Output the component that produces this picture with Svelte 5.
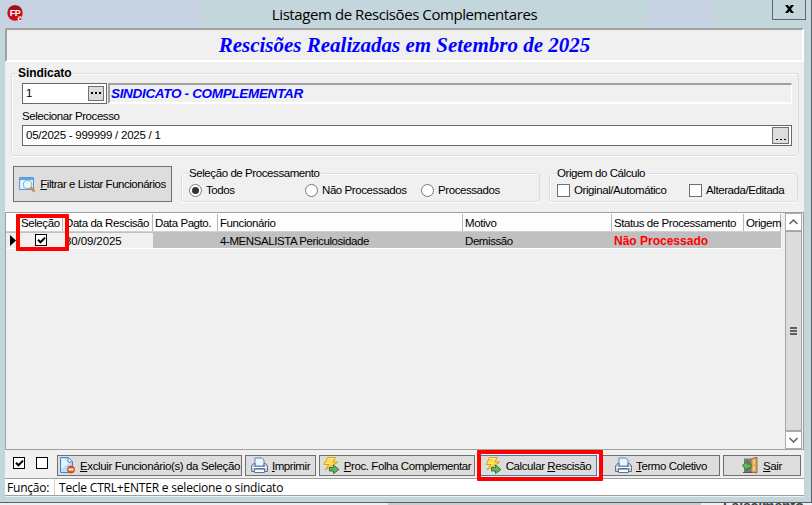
<script>
  let code = $state('1');
  let process = $state('05/2025 - 999999 / 2025 / 1');
  let filter = $state('Todos');

  const filters = [
    { label: 'Todos', cls: 'r-all' },
    { label: 'Não Processados', cls: 'r-pending' },
    { label: 'Processados', cls: 'r-done' }
  ];

  const columns = [
    { key: 'sel', label: 'Seleção' },
    { key: 'date', label: 'Data da Rescisão' },
    { key: 'paid', label: 'Data Pagto.' },
    { key: 'name', label: 'Funcionário' },
    { key: 'reason', label: 'Motivo' },
    { key: 'status', label: 'Status de Processamento' },
    { key: 'origin', label: 'Origem' }
  ];

  const row = {
    date: '30/09/2025',
    paid: '',
    name: '4-MENSALISTA Periculosidade',
    reason: 'Demissão',
    status: 'Não Processado',
    origin: ''
  };
</script>

{#snippet check()}
  <svg class="tick" width="9" height="9" viewBox="0 0 9 9"><path d="M1 3.7 3.5 6.3 8 1.6" fill="none" stroke="#000" stroke-width="2" /></svg>
{/snippet}

{#snippet printer()}
  <svg width="17" height="17" viewBox="0 0 17 17">
    <path d="M4 1h7l2 2v6H4z" fill="#e8f5ff" stroke="#5d89bd" />
    <path d="M2.5 6.5H4V10h9V6.5h1.5L16.5 9v5.5H.5V9z" fill="#c6cedb" stroke="#64718b" />
    <path d="M1 10.5h15" stroke="#fff" />
    <path d="M3.5 11.5h10v4h-10z" fill="#f6faff" stroke="#607495" />
    <path d="M4 12.5h9" stroke="#83a9d5" />
  </svg>
{/snippet}

{#snippet bolt()}
  <svg width="17" height="17" viewBox="0 0 17 17">
    <path d="M4.5.5h8L10 5h5L2 13l4-5.500H1z" fill="#ffda48" stroke="#dba31d" stroke-linejoin="round" />
    <path d="M5.500 1.500h5M3 6.500l5-.5" stroke="#fff19a" />
    <path d="M6.500 10.500h4V8l5.500 4.500-5.500 4V14h-4z" fill="#63b552" stroke="#34783b" />
  </svg>
{/snippet}

<div class="screen">
  <div class="window">
    <header>
      <svg class="logo" width="17" height="17" viewBox="0 0 17 17">
        <circle cx="8" cy="8" r="7.700" fill="#c90d16" />
        <path d="M1 5a7.700 7.700 0 0 1 14 0" fill="#9e141c" />
        <text x="2.700" y="11" font-size="9" textLength="10.500" lengthAdjust="spacingAndGlyphs" font-weight="bold" fill="#fff">FP</text>
        <circle cx="12.800" cy="13.500" r="2.300" fill="#fff" />
        <path d="m11.500 12 2.500 2.500M14 12.500v2h-2" fill="none" stroke="#d31b27" />
      </svg>
      <h1>Listagem de Rescisões Complementares</h1>
      <button class="close" aria-label="Fechar">
        <svg width="9" height="8" viewBox="0 0 9 8"><path d="M0 0h3l1.500 2L6 0h3L6 4l3 4H6L4.500 6 3 8H0l3-4z" /></svg>
      </button>
    </header>

    <main>
      <div class="banner"><span>Rescisões Realizadas em Setembro de 2025</span></div>

      <div class="form">
        <section class="group union">
          <div class="legend"><b>Sindicato</b></div>
          <div class="union-line">
            <div class="edit code"><span>{code}</span><button class="dots bold" aria-label="Buscar"><i></i><i></i><i></i></button></div>
            <div class="union-name"><span>SINDICATO - COMPLEMENTAR</span></div>
          </div>
          <div class="label"><span>Selecionar Processo</span></div>
          <div class="edit process"><span>{process}</span><button class="dots" aria-label="Selecionar"><i></i><i></i><i></i></button></div>
        </section>

        <div class="filters">
          <button class="btn filter">
            <svg width="17" height="17" viewBox="0 0 17 17">
              <path d="M.5 1.500h14v12H.5z" fill="#d4edff" stroke="#5b9bd5" />
              <path d="M1 2h13v2H1z" fill="#5fa8e8" />
              <path d="M2 6h3M2 8h3M2 10h3" stroke="#fff" />
              <circle cx="8.500" cy="8.500" r="4.200" fill="#e5f7ff" stroke="#8ea6b8" />
              <path d="m11.500 11.500 4 4" stroke="#d58a3e" stroke-width="2.500" />
            </svg>
            <span><u>F</u>iltrar e Listar Funcionários</span>
          </button>
          <section class="group processing">
            <div class="legend"><span>Seleção de Processamento</span></div>
            <div class="options">
              {#each filters as f}
                <button class="option {f.cls}" onclick={() => (filter = f.label)}>
                  <i class="radio" class:on={filter === f.label}></i><span>{f.label}</span>
                </button>
              {/each}
            </div>
          </section>
          <section class="group source">
            <div class="legend"><span>Origem do Cálculo</span></div>
            <div class="options">
              <div class="option original"><i class="box gray"></i><span>Original/Automático</span></div>
              <div class="option edited"><i class="box gray"></i><span>Alterada/Editada</span></div>
            </div>
          </section>
        </div>
      </div>

      <div class="grid">
        <div class="table">
          <div class="row head">
            <div class="cell mark"></div>
            {#each columns as c}
              <div class="cell {c.key}"><span>{c.label}</span></div>
            {/each}
          </div>
          <div class="row data">
            <div class="cell mark"><svg width="6" height="11" viewBox="0 0 6 11"><path d="M0 0 6 5.500 0 11z" /></svg></div>
            <div class="cell sel"><i class="box">{@render check()}</i></div>
            {#each columns.slice(1) as c}
              <div class="cell {c.key}"><span>{row[c.key]}</span></div>
            {/each}
          </div>
          <div class="callout on-selection"></div>
        </div>
        <div class="scroll">
          <div class="arrow"><svg width="9" height="6" viewBox="0 0 9 6"><path d="m.5 5 4-4 4 4" fill="none" stroke="#606060" stroke-width="1.500" /></svg></div>
          <div class="thumb"><i></i><i></i><i></i></div>
          <div class="arrow"><svg width="9" height="6" viewBox="0 0 9 6"><path d="m.5 1 4 4 4-4" fill="none" stroke="#606060" stroke-width="1.500" /></svg></div>
        </div>
      </div>

      <div class="toolbar">
        <i class="box">{@render check()}</i>
        <i class="box second"></i>
        <button class="btn delete">
          <svg width="17" height="17" viewBox="0 0 17 17">
            <path d="M1.500.5h8l4 4v11h-12z" fill="#b9ddfc" stroke="#4588ce" />
            <path d="M9 1v4h4.500" fill="#fff" stroke="#4588ce" />
            <path d="M2.500 2v10l7-6V5H8V2z" fill="#e7f5ff" />
            <circle cx="12" cy="12.500" r="3.500" fill="#e85e26" stroke="#c44618" />
            <path d="M9.500 12.500h5" stroke="#fff" stroke-width="1.700" />
          </svg>
          <span><u>E</u>xcluir Funcionário(s) da Seleção</span>
        </button>
        <button class="btn print">{@render printer()}<span><u>I</u>mprimir</span></button>
        <button class="btn payroll">{@render bolt()}<span><u>P</u>roc. Folha Complementar</span></button>
        <button class="btn calculate">{@render bolt()}<span>Calcular <u>R</u>escisão</span><div class="callout on-calculate"></div></button>
        <button class="btn term">{@render printer()}<span><u>T</u>ermo Coletivo</span></button>
        <button class="btn exit">
          <svg width="17" height="17" viewBox="0 0 17 17">
            <path d="M2 1.500h10v14H2z" fill="#777b80" />
            <path d="M1 15.500h14" stroke="#555" />
            <path d="m9 2 6-2v16l-6-1z" fill="#dea35c" stroke="#a56d32" />
            <path d="m11 3 2-.5v5H11zM11 9h2v5l-2-.5z" fill="#f1c889" />
            <path d="M.5 8.500 5 4v3h4v4H5v3z" fill="#68b75a" stroke="#317b37" />
          </svg>
          <span><u>S</u>air</span>
        </button>
      </div>

      <footer><div class="hint-label"><span>Função:</span></div><div class="hint"><span>Tecle CTRL+ENTER e selecione o sindicato</span></div></footer>
    </main>
  </div>
  <div class="behind"><div class="behind-bar"></div><b>Falecimento</b></div>
</div>

<style>
  :global(body) {
    overflow: hidden;
  }

  .screen {
    width: 812px;
    height: 505px;
    overflow: hidden;
    color: #000;
    font: 11.5px/13px 'Liberation Sans', Arial, sans-serif;
    letter-spacing: -0.42px;
    white-space: nowrap;
  }

  .screen :global(*) {
    box-sizing: border-box;
  }

  button {
    padding: 0;
    font: inherit;
    letter-spacing: inherit;
    color: inherit;
  }

  svg {
    display: block;
    flex: none;
  }

  .window {
    display: flex;
    flex-direction: column;
    height: 503px;
    padding: 0 7px 0 5px;
    border-right: 1px solid #585f6b;
    border-bottom: 1px solid #585f6b;
    background: #c3d6dc;
  }

  header {
    display: flex;
    align-items: flex-start;
    height: 28px;
    margin: 0 -7px 0 -5px;
    padding: 0 5px 0 7px;
    background: linear-gradient(90deg, #c7d2e2 203px, #c3d6dc 203px 651px, #c7d2e2 651px 715px, #c3d6dc 715px);
  }

  .logo {
    margin-top: 5px;
  }

  h1 {
    flex: 1;
    margin: 4px 0 0;
    padding-left: 13px;
    font: 15px/20px 'Open Sans', 'Noto Sans', sans-serif;
    letter-spacing: -0.42px;
    text-align: center;
  }

  .close {
    display: flex;
    justify-content: center;
    width: 34px;
    height: 20px;
    padding-top: 5px;
    border: 1px solid #5f6574;
    border-top: 0;
    background: #c3d6dc;
  }

  main {
    width: 799px;
    height: 469px;
    background: #f0f0f0;
  }

  .banner {
    height: 34px;
    border: 2px solid #a0a0a0;
    border-right-color: #fff;
    border-bottom-color: #fff;
    font: italic bold 21px/30px 'Liberation Serif', 'Times New Roman', serif;
    letter-spacing: 0;
    color: #00f;
    text-align: center;
  }

  .form {
    height: 150px;
    padding: 11px 5px 0 6px;
  }

  .group {
    border: 1px solid #d5dfe5;
    border-radius: 3px;
    box-shadow: inset 1px 1px #fff, 0 1px #fff;
  }

  .legend {
    display: flex;
    height: 13px;
    margin: -7px 0 0 6px;
  }

  .legend span,
  .legend b {
    padding: 0 1px;
    background: #f0f0f0;
  }

  .union {
    height: 83px;
    padding: 0 6px 0 10px;
  }

  .union .legend {
    margin-left: -5px;
    font-size: 12px;
    letter-spacing: -0.05px;
  }

  .union-line {
    display: flex;
    gap: 1px;
    margin-top: 3px;
  }

  .edit {
    display: flex;
    align-items: center;
    height: 21px;
    padding: 0 2px 1px 3px;
    border: 1px solid #696969;
    background: #fff;
  }

  .edit span {
    flex: 1;
    letter-spacing: -0.25px;
  }

  .code {
    width: 85px;
  }

  .dots {
    display: flex;
    align-items: flex-end;
    justify-content: center;
    gap: 2px;
    width: 17px;
    height: 17px;
    padding-bottom: 3px;
    border: 1px solid #707070;
    background: #ddd;
  }

  .dots i {
    width: 2px;
    height: 1px;
    background: #000;
  }

  .dots.bold {
    width: 16px;
    height: 15px;
    padding-bottom: 6px;
  }

  .dots.bold i {
    height: 2px;
  }

  .union-name {
    flex: 1;
    height: 21px;
    padding-left: 1px;
    border: 2px solid #a0a0a0;
    border-right: 1px solid #fff;
    border-bottom-color: #fff;
    color: #00f;
    font: italic bold 13.5px/17px 'Liberation Sans', Arial, sans-serif;
    letter-spacing: -0.32px;
  }

  .label {
    margin: 6px 0 2px;
  }

  .filters {
    display: flex;
    align-items: flex-start;
    padding: 10px 0 0 2px;
  }

  .btn {
    display: flex;
    align-items: center;
    justify-content: center;
    gap: 4px;
    height: 21px;
    border: 1px solid #707070;
    background: #ddd;
  }

  .btn span {
    padding-top: 1px;
  }

  .filter {
    width: 159px;
    height: 36px;
    letter-spacing: -0.48px;
  }

  .processing {
    width: 359px;
    height: 29px;
    margin: 7px 9px 0;
  }

  .source {
    width: 249px;
    height: 29px;
    margin-top: 7px;
  }

  .options {
    display: flex;
    padding-left: 7px;
    margin-top: 3px;
  }

  .option {
    display: flex;
    align-items: center;
    gap: 4px;
    border: 0;
    background: none;
  }

  .option span {
    padding-top: 1px;
  }

  .r-all,
  .r-pending {
    width: 116px;
  }

  .original {
    width: 132px;
  }

  .radio {
    display: flex;
    align-items: center;
    justify-content: center;
    width: 13px;
    height: 13px;
    border: 1px solid #777;
    border-radius: 50%;
    background: #fff;
  }

  .radio.on::after {
    content: '';
    width: 7px;
    height: 7px;
    border-radius: 50%;
    background: #333;
  }

  .box {
    display: flex;
    flex: none;
    align-items: center;
    justify-content: center;
    width: 12px;
    height: 12px;
    border: 1px solid #000;
    background: #fff;
  }

  .box.gray {
    width: 13px;
    height: 13px;
    border-color: #707070;
  }

  .grid {
    display: flex;
    height: 238px;
    border-top: 1px solid #a0a0a0;
    border-bottom: 1px solid #a0a0a0;
    border-left: 1px solid #a0a0a0;
  }

  .table {
    position: relative;
    flex: 1;
  }

  .row {
    display: flex;
    width: 775px;
  }

  .head {
    height: 19px;
    border-top: 1px solid #fff;
    background: #fdfdfd;
    border-bottom: 1px solid #d0d0d0;
  }

  .cell {
    flex: none;
    height: 100%;
    padding: 3px 0 0 2px;
  }

  .head .cell {
    border-right: 1px solid #b8b8b8;
  }

  .data {
    height: 17px;
    padding-top: 1px;
    border-bottom: 1px solid #fff;
    background: #c0c0c0;
  }

  .mark { width: 13px; }
  .sel { width: 44px; }
  .date { width: 90px; }
  .paid { width: 65px; }
  .name { width: 245px; }
  .reason { width: 149px; }
  .status { width: 132px; }
  .origin { width: 37px; }

  .data .mark,
  .data .sel,
  .data .date {
    background: #f0f0f0;
  }

  .data .cell {
    padding-top: 2px;
  }

  .data .mark {
    padding: 2px 0 0 4px;
  }

  .data .sel {
    padding: 1px 0 0 16px;
  }

  .data .date {
    letter-spacing: -0.1px;
  }

  .data .status {
    color: #f00;
    font-weight: bold;
    font-size: 12px;
    letter-spacing: 0;
  }

  .callout {
    position: absolute;
    border: 4px solid #ff0000;
    border-radius: 1px;
    pointer-events: none;
  }

  .on-selection {
    left: 10px;
    top: 1px;
    width: 53px;
    height: 37px;
  }

  .scroll {
    display: flex;
    flex-direction: column;
    width: 19px;
    padding-right: 1px;
    border-right: 1px solid #a0a0a0;
  }

  .arrow {
    display: flex;
    align-items: center;
    justify-content: center;
    height: 18px;
    border: 1px solid #aaa;
    background: #fff;
  }

  .thumb {
    display: flex;
    flex: 1;
    flex-direction: column;
    align-items: center;
    justify-content: center;
    gap: 1px;
    border: 1px solid #a6a6a6;
    background: #dcdcdc;
  }

  .thumb i {
    width: 7px;
    height: 2px;
    background: #606060;
  }

  .toolbar {
    display: flex;
    height: 28px;
    padding: 5px 0 0 8px;
  }

  .toolbar .box {
    margin-top: 2px;
  }

  .toolbar .second {
    margin: 2px 9px 0 11px;
  }

  .delete { width: 185px; letter-spacing: -0.36px; }
  .print { width: 71px; margin-left: 3px; }
  .payroll { width: 156px; margin-left: 3px; }
  .term { width: 118px; margin-left: 5px; }
  .exit { width: 78px; margin-left: 3px; }

  .calculate {
    position: relative;
    width: 118px;
    margin-left: 4px;
    border-color: #3c7fb1;
  }

  .on-calculate {
    left: -3px;
    top: -6px;
    width: 126px;
    height: 31px;
  }

  footer {
    display: flex;
    height: 18px;
    border-top: 1px solid #a0a0a0;
    border-bottom: 1px solid #a0a0a0;
    background: #fff;
    font: 12px/17px 'Open Sans', 'Noto Sans', sans-serif;
    letter-spacing: -0.2px;
  }

  .hint-label {
    width: 50px;
    padding-left: 2px;
    border-right: 1px solid #d7d7d7;
  }

  .hint {
    padding-left: 4px;
  }

  .behind {
    display: flex;
    height: 2px;
    padding-left: 388px;
    overflow: hidden;
    background: #f0f0f0;
  }

  .behind-bar {
    width: 313px;
    margin-right: 22px;
    background: #ccc;
  }

  .behind b {
    color: #444;
    font-size: 14px;
    line-height: 6px;
    letter-spacing: -0.1px;
  }
</style>
